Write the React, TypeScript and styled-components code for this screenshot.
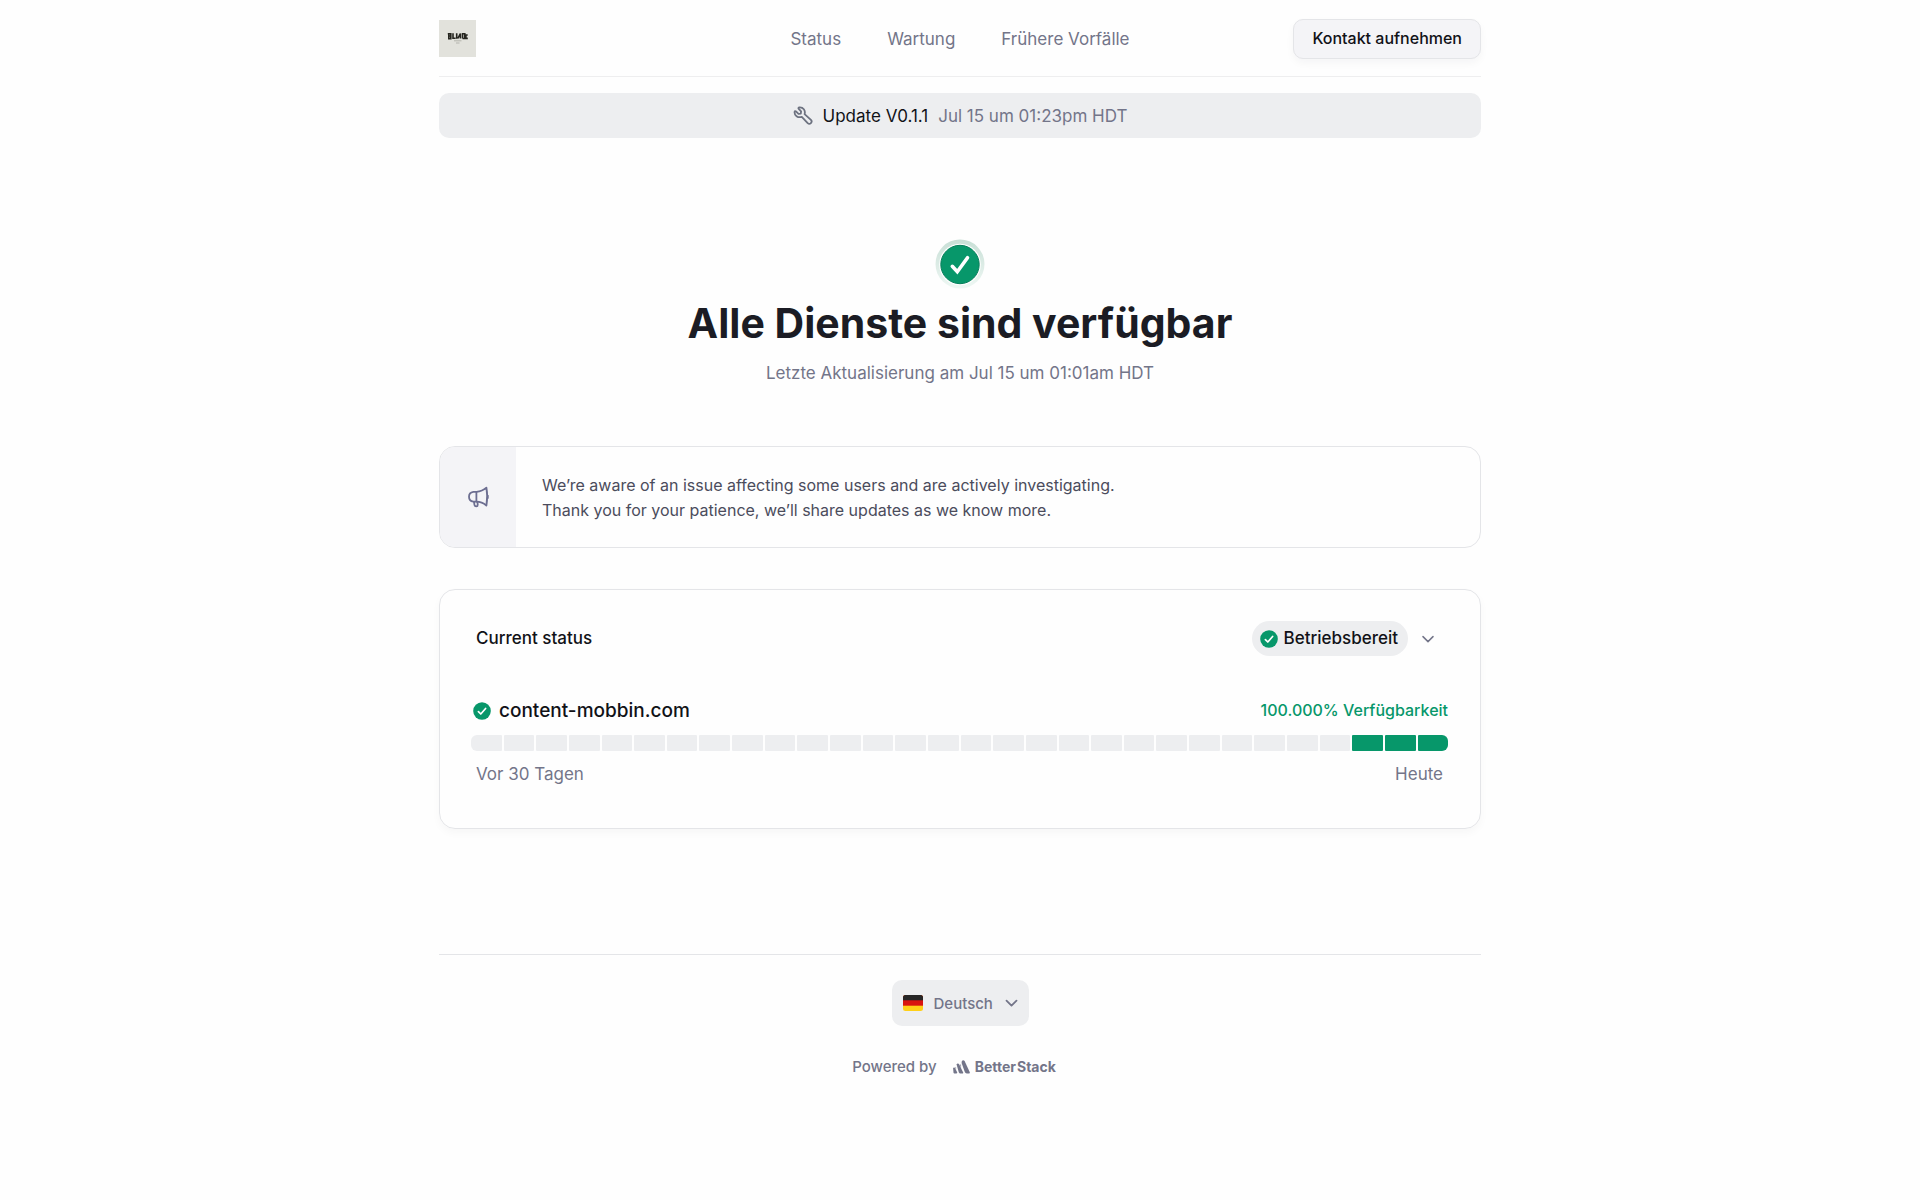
import React from "react";
import styled, { createGlobalStyle } from "styled-components";

const color = {
  ink: "#111217",
  title: "#1b1c24",
  body: "#4b4c5c",
  muted: "#737589",
  green: "#07976a",
  soft: "#edeef0",
  panel: "#f4f4f7",
  line: "#e4e5e8",
};

const GlobalStyle = createGlobalStyle`
  *, *::before, *::after { box-sizing: border-box; }
  body {
    margin: 0;
    background: #fefefe;
    color: ${color.ink};
    font-family: Inter, "Liberation Sans", sans-serif;
    font-size: 17px;
    line-height: 25px;
  }
  h1, h2, p { margin: 0; }
  button, select { font: inherit; color: inherit; }
  svg { display: block; flex: none; }
`;

const Page = styled.div`
  width: 100%;
  max-width: 1042px;
  margin: 0 auto;
`;

const Header = styled.header`
  display: grid;
  grid-template-columns: 1fr auto 1fr;
  align-items: center;
  height: 77px;
  padding-top: 1px;
  border-bottom: 1px solid #eeeeef;
`;

const LogoLink = styled.a`
  justify-self: start;
`;

const Nav = styled.nav`
  display: flex;
  gap: 46px;
  padding-top: 2px;
`;

const NavLink = styled.a`
  color: ${color.muted};
  text-decoration: none;
`;

const ContactButton = styled.button`
  justify-self: end;
  height: 40px;
  padding: 0 18px;
  border: 1px solid ${color.line};
  border-radius: 10px;
  background: ${color.panel};
  box-shadow: 0 4px 8px rgba(20, 20, 40, 0.04);
  color: ${color.ink};
  font-size: 16px;
  font-weight: 500;
`;

const Banner = styled.a`
  display: flex;
  align-items: center;
  justify-content: center;
  gap: 10px;
  height: 45px;
  margin-top: 16px;
  padding-top: 1px;
  border-radius: 10px;
  background: ${color.soft};
  color: ${color.muted};
  text-decoration: none;
`;

const BannerTitle = styled.span`
  color: ${color.ink};
`;

const Hero = styled.section`
  display: flex;
  flex-direction: column;
  align-items: center;
  padding: 101px 0 60px;
`;

const Title = styled.h1`
  margin-top: 6px;
  color: ${color.title};
  font-size: 41px;
  font-weight: 700;
  line-height: 56px;
`;

const Updated = styled.p`
  margin-top: 10px;
  color: ${color.muted};
`;

const Notice = styled.section`
  display: flex;
  overflow: hidden;
  border: 1px solid ${color.line};
  border-radius: 16px;
`;

const NoticeIcon = styled.div`
  display: flex;
  align-items: center;
  justify-content: center;
  width: 76px;
  background: ${color.panel};
`;

const NoticeText = styled.p`
  padding: 26px 26px 24px;
  color: ${color.body};
  font-size: 16px;
`;

const Card = styled.section`
  margin-top: 41px;
  padding: 31px 32px 41px 31px;
  border: 1px solid ${color.line};
  border-radius: 16px;
  box-shadow: 0 4px 8px rgba(20, 20, 40, 0.03);
`;

const CardHeader = styled.div`
  display: flex;
  align-items: center;
  justify-content: space-between;
  padding: 0 5px;
`;

const CardTitle = styled.h2`
  font-size: 17px;
  font-weight: 450;
`;

const Toggle = styled.button`
  display: flex;
  align-items: center;
  gap: 14px;
  padding: 0 9px 0 0;
  border: 0;
  background: none;
  font-weight: 450;
`;

const Pill = styled.span`
  display: flex;
  align-items: center;
  gap: 6px;
  height: 35px;
  padding: 0 10px 0 8px;
  border-radius: 18px;
  background: ${color.soft};
`;

const Monitor = styled.div`
  display: flex;
  align-items: center;
  justify-content: space-between;
  margin-top: 42px;
`;

const MonitorName = styled.div`
  display: flex;
  align-items: center;
  gap: 8px;
  padding-left: 2px;
  font-size: 19px;
  font-weight: 450;
`;

const Uptime = styled.span`
  color: ${color.green};
  font-size: 16px;
  font-weight: 500;
`;

const Days = styled.div`
  display: flex;
  gap: 2px;
  overflow: hidden;
  margin-top: 12px;
  border-radius: 6px;
`;

const Day = styled.span<{ $up: boolean }>`
  flex: 1;
  height: 16px;
  border-radius: 1px;
  background: ${(p) => (p.$up ? color.green : color.soft)};
`;

const Range = styled.div`
  display: flex;
  justify-content: space-between;
  margin-top: 11px;
  padding: 0 5px;
  color: ${color.muted};
`;

const Footer = styled.footer`
  display: flex;
  flex-direction: column;
  align-items: center;
  margin-top: 125px;
  padding: 25px 0 120px;
  border-top: 1px solid ${color.line};
  color: ${color.muted};
  font-size: 15px;
  font-weight: 500;
`;

const Language = styled.label`
  display: flex;
  align-items: center;
  height: 46px;
  padding: 0 11px;
  gap: 11px;
  border-radius: 10px;
  background: ${color.soft};
`;

const LanguageSelect = styled.select`
  padding: 0;
  border: 0;
  appearance: none;
  background: none;
`;

const Powered = styled.div`
  display: flex;
  align-items: center;
  gap: 16px;
  margin-top: 28px;
  padding-right: 12px;
`;

const Brand = styled.a`
  display: flex;
  align-items: center;
  gap: 5px;
  color: ${color.muted};
  font-size: 14px;
  font-weight: 650;
  text-decoration: none;
`;

const BrandName = styled.span`
  display: flex;
  gap: 1px;
`;

const CheckDot = () => (
  <svg width="18" height="18" viewBox="0 0 18 18" fill="none" aria-hidden="true">
    <circle cx="9" cy="9" r="8.8" fill={color.green} />
    <path d="M5.4 9.6l2.4 2.4 4.8-5.5" stroke="#fff" strokeWidth="1.7" strokeLinecap="round" strokeLinejoin="round" />
  </svg>
);

const HeroCheck = () => (
  <svg width="50" height="50" viewBox="0 0 50 50" fill="none" aria-hidden="true">
    <defs>
      <linearGradient id="halo" x1="0" y1="0" x2="0" y2="1">
        <stop offset="0" stopColor="#c8dfd6" />
        <stop offset="1" stopColor="#eff8f4" />
      </linearGradient>
    </defs>
    <circle cx="25" cy="25" r="24.5" fill="url(#halo)" />
    <circle cx="25" cy="25.5" r="20.8" fill="#fff" />
    <circle cx="25" cy="25.5" r="19.2" fill={color.green} stroke="#07805b" strokeWidth="1" />
    <path d="M17.3 27.3l5 5.4 10.2-14" stroke="#fff" strokeWidth="3.6" strokeLinecap="round" strokeLinejoin="miter" />
  </svg>
);

const Chevron = ({ width = 12, stroke = 1.5 }: { width?: number; stroke?: number }) => (
  <svg width={width} height="8" viewBox="0 0 12 8" fill="none" aria-hidden="true">
    <path d="M1 1.6l5 5 5-5" stroke={color.muted} strokeWidth={stroke} strokeLinecap="round" strokeLinejoin="round" />
  </svg>
);

const Wrench = () => (
  <svg width="20" height="20" viewBox="0 0 20 20" fill="none" aria-hidden="true">
    <path
      d="M5.7 2.8c-.6-.6-.2-1.3.7-1.4 3.8-.3 6.3 3 5.2 6.8l6.3 5.7a2.3 2.3 0 0 1-3.2 3.3l-5.9-6.3C4.8 12 1.2 9.5 1.6 5.9c.1-.9.8-1.100 1.400-.5l2.500 2.500 2.300-.3.3-2.300z"
      stroke="#6d7280"
      strokeWidth="1.8"
      strokeLinejoin="round"
      strokeLinecap="round"
    />
  </svg>
);

const Megaphone = () => (
  <svg width="22" height="22" viewBox="0 0 22 22" fill="none" stroke="#6c6e91" strokeWidth="1.8" strokeLinecap="round" strokeLinejoin="round" aria-hidden="true">
    <path d="M19.4 1.7C20.4 7 20.4 13.5 19.4 19.6C16.4 17 12.6 15.7 9.4 15.7H6.3A5 5 0 0 1 6.3 5.8H9.4C13 5.6 16.6 4.3 19.4 1.7z" />
    <path d="M9.4 5.8v9.9M20.8 9.6v2.4M7 15.8l.5 3.2c.4 2 3.3 1.9 3.2-.3l-.2-2.8" />
  </svg>
);

const Flag = () => (
  <svg width="20" height="16" viewBox="0 0 20 16" aria-hidden="true">
    <clipPath id="flag"><rect width="20" height="16" rx="2.5" /></clipPath>
    <g clipPath="url(#flag)">
      <rect width="20" height="16" fill="#ffd018" />
      <rect width="20" height="10.7" fill="#d9140f" />
      <rect width="20" height="5.3" fill="#262626" />
    </g>
  </svg>
);

const StackMark = () => (
  <svg width="17" height="14" viewBox="0 0 17 14" fill={color.muted} aria-hidden="true">
    <path d="M8.8 1.4C9.2.1 11 0 11.6 1.1L16.8 12.2c.2.8-.4 1.3-1 1.3h-2c-1 0-1.6-.5-2-1.4L8.6 3z" />
    <path d="M3.6 4.5c.3-1.2 1.8-1.4 2.4-.4l4.2 8.3c.2.7-.2 1.1-.9 1.1H7.4c-.8 0-1.3-.4-1.6-1.2z" />
    <path d="M.1 8.3c.2-1 1.3-1.2 1.8-.4l2.3 4.4c.2.7-.2 1.2-.8 1.2H1.8c-.7 0-1.2-.3-1.3-1.1z" />
    <path d="M8.1 3.8v4.3L6.9 5.3zM3.1 6.7v3.2L2.1 7.8z" opacity=".7" />
  </svg>
);

const OliverLogo = () => (
  <svg width="37" height="37" viewBox="0 0 37 37" fill="none" role="img" aria-label="Logo">
    <rect width="37" height="37" fill="#e2e2dc" />
    <g stroke="#25251f" strokeWidth="1.6">
      <path d="M8.8 13.8h3v4.8H9.8v-4.8M11.8 16H9.8M14 13.3v5h2.6M17.7 13.3v5.4M18.8 18.5l2.6-5v5M23.6 18.5v-4.7h2.2v4.7h-2.2M28.7 15h-1.8v3.4h1.9" />
    </g>
    <path d="M15 20.8h7.5M17 23h3.5" stroke="#a9a9a2" strokeWidth=".8" />
  </svg>
);

const days = Array.from({ length: 30 }, (_, i) => i >= 27);

export default function App() {
  return (
    <>
      <GlobalStyle />
      <Page>
        <Header>
          <LogoLink href="#"><OliverLogo /></LogoLink>
          <Nav>
            <NavLink href="#status">Status</NavLink>
            <NavLink href="#wartung">Wartung</NavLink>
            <NavLink href="#vorfaelle">Frühere Vorfälle</NavLink>
          </Nav>
          <ContactButton type="button">Kontakt aufnehmen</ContactButton>
        </Header>
        <Banner href="#wartung">
          <Wrench />
          <BannerTitle>Update V0.1.1</BannerTitle>
          <span>Jul 15 um 01:23pm HDT</span>
        </Banner>
        <main>
          <Hero>
            <HeroCheck />
            <Title>Alle Dienste sind verfügbar</Title>
            <Updated>Letzte Aktualisierung am Jul 15 um 01:01am HDT</Updated>
          </Hero>
          <Notice>
            <NoticeIcon><Megaphone /></NoticeIcon>
            <NoticeText>
              We’re aware of an issue affecting some users and are actively investigating.
              <br />
              Thank you for your patience, we’ll share updates as we know more.
            </NoticeText>
          </Notice>
          <Card>
            <CardHeader>
              <CardTitle>Current status</CardTitle>
              <Toggle type="button" aria-expanded="true">
                <Pill><CheckDot />Betriebsbereit</Pill>
                <Chevron />
              </Toggle>
            </CardHeader>
            <Monitor>
              <MonitorName><CheckDot />content-mobbin.com</MonitorName>
              <Uptime>100.000% Verfügbarkeit</Uptime>
            </Monitor>
            <Days>
              {days.map((up, i) => <Day key={i} $up={up} />)}
            </Days>
            <Range>
              <span>Vor 30 Tagen</span>
              <span>Heute</span>
            </Range>
          </Card>
        </main>
        <Footer>
          <Language>
            <Flag />
            <LanguageSelect aria-label="Sprache">
              <option>Deutsch</option>
            </LanguageSelect>
            <Chevron width={13} stroke={1.8} />
          </Language>
          <Powered>
            <span>Powered by</span>
            <Brand href="#betterstack">
              <StackMark />
              <BrandName><span>Better</span><span>Stack</span></BrandName>
            </Brand>
          </Powered>
        </Footer>
      </Page>
    </>
  );
}
